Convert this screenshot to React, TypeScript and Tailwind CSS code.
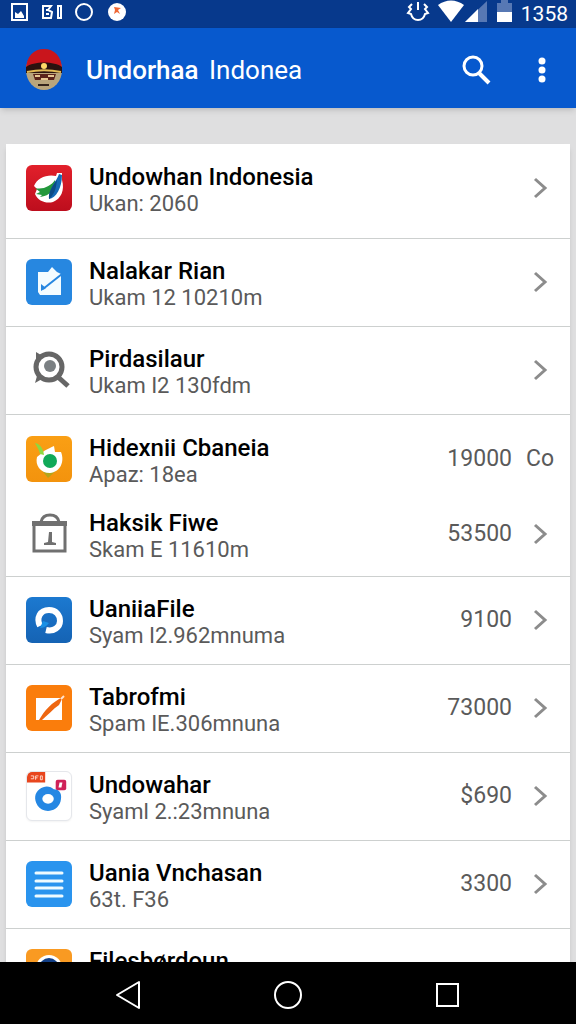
import type { ReactNode } from 'react';

interface Row {
  title: string;
  sub?: string;
  count?: string;
  action?: string;
  icon: ReactNode;
  spacing?: string;
}

const TileIcon = ({ bg, children }: { bg: string; children: ReactNode }) => (
  <svg viewBox="0 0 46 46" className={`h-[46px] w-[46px] rounded-md ${bg}`} aria-hidden="true">
    {children}
  </svg>
);

const LeafIcon = () => (
  <TileIcon bg="bg-linear-to-b from-[#e2202b] to-[#bd0d1d]">
    <path d="M30 11C21 9 11 13 8 21L11 24 9 29C12 36 20 39 27 37C35 34 39 25 36 15L36 8 31 8Z" fill="#fff" />
    <path d="M9 23C17 25 25 21 29 15C30 24 24 31 14 32L16 30 10 29 14 27Z" fill="#23983c" />
    <path d="M33 9C31 16 23 22 23 34C30 33 36 23 36 10Z" fill="#1569b4" />
    <path d="M23 34C22 28 26 21 31 15C30 24 28 30 23 34Z" fill="#0c4b86" />
  </TileIcon>
);

const NoteCheckIcon = () => (
  <TileIcon bg="bg-[#2787e0]">
    <path d="M12 13H22L26 8 31 13 35 15V36H14L12 33Z" fill="#f4fcff" />
    <path d="M17 30L36 15" fill="none" stroke="#2787e0" strokeWidth="2" />
    <path d="M15 25L20 29 15 32Z" fill="#2787e0" />
  </TileIcon>
);

const LensIcon = () => (
  <svg viewBox="0 0 46 46" className="h-[46px] w-[46px]" aria-hidden="true">
    <circle cx="23" cy="20" r="13" fill="none" stroke="#666" strokeWidth="5" />
    <circle cx="24" cy="19" r="6" fill="#7b8083" />
    <path d="M10 5L15 8 10 14ZM11 29L16 32 9 36Z" fill="#666" />
    <path d="M32 30L42 39" stroke="#666" strokeWidth="5" />
  </svg>
);

const FruitIcon = () => (
  <TileIcon bg="bg-linear-to-b from-[#fa9f14] to-[#f3930d]">
    <path d="M14 32L22 42 32 33Z" fill="#b3a51b" />
    <path d="M18 15C22 13 25 11 28 10L29 16 35 16C39 26 34 36 24 37C14 37 9 29 11 21L16 17Z" fill="#fff" />
    <path d="M9 7C14 8 17 12 18 19L14 18C13 13 11 11 9 7Z" fill="#8ed840" />
    <circle cx="24" cy="25" r="7" fill="#11a958" />
  </TileIcon>
);

const CaseIcon = () => (
  <svg viewBox="0 0 46 46" className="h-[46px] w-[46px]" aria-hidden="true">
    <path d="M8 12H39V40H8Z" fill="none" stroke="#707070" strokeWidth="3" />
    <path d="M6 10H41V15H6Z" fill="#707070" />
    <path d="M15 11C16 6 19 4 24 4C29 4 32 6 33 11" fill="none" stroke="#707070" strokeWidth="3" />
    <path d="M23 21H26V31L30 32V34H18V32L22 31Z" fill="#707070" />
  </svg>
);

const SwirlIcon = () => (
  <TileIcon bg="bg-linear-to-b from-[#1c79d0] to-[#1563b4]">
    <path d="M14 29C10 21 14 13 23 13C30 13 34 18 34 24C34 30 28 35 20 33" fill="none" stroke="#fff" strokeWidth="6" />
    <path d="M14 31L17 24 23 26C20 30 17 31 14 31Z" fill="#188fe5" />
  </TileIcon>
);

const PenIcon = () => (
  <TileIcon bg="bg-[#fa7d0c]">
    <path d="M10 13H36V35H10Z" fill="#fff" />
    <path d="M13 35C18 26 26 17 37 12L33 20C27 24 22 30 16 35Z" fill="#ee6712" />
    <path d="M35 14L38 11" stroke="#ffe3cf" strokeWidth="2" />
  </TileIcon>
);

const BlobIcon = () => (
  <svg viewBox="0 0 46 50" className="h-[50px] w-[46px] rounded-md border border-gray-200 bg-white shadow-xs" aria-hidden="true">
    <path d="M4 0H19V11H0V5C0 2 2 0 4 0Z" fill="#e8461e" />
    <path d="M4 4H7V7H4M9 8V4H12M9 6H11M14 4V8M14 4H16V8H14" fill="none" stroke="#ffd9cc" />
    <rect x="30" y="8" width="11" height="11" rx="2" fill="#cf2259" />
    <path d="M34 11H37L36 16H33Z" fill="#fff" />
    <path d="M13 18C19 13 25 15 28 18C35 18 37 24 35 31C31 43 16 43 11 35C7 28 8 22 13 18Z" fill="#2587e3" />
    <ellipse cx="22" cy="28" rx="6" ry="5" fill="#fff" />
  </svg>
);

const LinesIcon = () => (
  <TileIcon bg="bg-[#2a94ee]">
    <path d="M10 12H36M10 20H36M10 27H36M10 35H36" stroke="#effbff" strokeWidth="3" strokeLinecap="round" />
  </TileIcon>
);

const DiscIcon = () => (
  <TileIcon bg="bg-[#f99a22]">
    <circle cx="23" cy="19" r="13" fill="#fff" />
    <circle cx="23" cy="19" r="10" fill="#123f86" />
  </TileIcon>
);

const defaultSpacing = 'pt-3.5 pb-[15px] border-b';

const rows: Row[] = [
  { title: 'Undowhan Indonesia', sub: 'Ukan: 2060', icon: <LeafIcon />, spacing: 'pt-[15px] pb-[21px] border-b' },
  { title: 'Nalakar Rian', sub: 'Ukam 12 10210m', icon: <NoteCheckIcon /> },
  { title: 'Pirdasilaur', sub: 'Ukam I2 130fdm', icon: <LensIcon /> },
  { title: 'Hidexnii Cbaneia', sub: 'Apaz: 18ea', count: '19000', action: 'Co', icon: <FruitIcon />, spacing: 'py-[15px]' },
  { title: 'Haksik Fiwe', sub: 'Skam E 11610m', count: '53500', icon: <CaseIcon />, spacing: 'pt-0.5 pb-[13px] border-b' },
  { title: 'UaniiaFile', sub: 'Syam I2.962mnuma', count: '9100', icon: <SwirlIcon /> },
  { title: 'Tabrofmi', sub: 'Spam IE.306mnuna', count: '73000', icon: <PenIcon /> },
  { title: 'Undowahar', sub: 'Syaml 2.:23mnuna', count: '$690', icon: <BlobIcon /> },
  { title: 'Uania Vnchasan', sub: '63t. F36', count: '3300', icon: <LinesIcon /> },
  { title: 'Filesbørdoun', icon: <DiscIcon /> },
];

const StatusBar = () => (
  <div className="flex h-7 shrink-0 items-center justify-between bg-[#07398c] pr-2 pl-2.5 text-white">
    <svg viewBox="0 0 118 28" className="h-7 w-[118px]" fill="none" stroke="#fff" strokeWidth="2" aria-hidden="true">
      <path d="M2 4H17V20H2Z" />
      <path d="M5 17V12L8 14 11 11 14 16V18H5Z" fill="#fff" stroke="none" />
      <path d="M33 6V18H41L42 12 38 10 41 6ZM36 10H39M36 14H39M48 6H51V18H48Z" />
      <circle cx="74" cy="12" r="8" />
      <circle cx="107" cy="12" r="9" fill="#fff" stroke="none" />
      <path d="M104 7L111 8 108 10 110 14 107 12 104 14 105 10Z" fill="#ef6734" stroke="none" />
    </svg>
    <div className="flex items-center gap-1.5">
      <svg viewBox="0 0 110 28" className="h-7 w-[110px]" aria-hidden="true">
        <path d="M7 4L4 7 6 9 3 13L6 14C7 18 10 20 13 20C16 20 19 18 20 14L23 13 20 9 22 7 19 4M13 2V10" fill="none" stroke="#fff" strokeWidth="2" />
        <path d="M33 5C41-1 51-1 59 5L46 22Z" fill="#fff" />
        <path d="M60 22L82 1V22Z" fill="#5778b4" />
        <path d="M60 22L73 9V22Z" fill="#fff" />
        <path d="M92 3H96V0H103V3H107V12H92Z" fill="#5778b4" />
        <path d="M92 12H107V22H92Z" fill="#fff" />
      </svg>
      <span className="text-[21px] leading-6">1358</span>
    </div>
  </div>
);

const AppBar = () => (
  <header className="relative z-10 flex h-20 shrink-0 items-center bg-[#0759ce] pt-1 pr-4 pl-[25px] text-white shadow-md">
    <svg viewBox="0 0 38 44" className="h-11 w-[38px]" aria-hidden="true">
      <ellipse cx="19" cy="22" rx="18" ry="20" fill="#b9a57c" />
      <path d="M1 22C1 8 9 1 19 1C29 1 37 8 37 22Z" fill="#c9151c" />
      <path d="M1 19C8 13 30 13 37 19V25H1Z" fill="#2a120f" />
      <path d="M2 24C12 22 26 22 36 24" fill="none" stroke="#e3bb55" strokeWidth="2" />
      <circle cx="19" cy="18" r="3" fill="#ffd968" />
      <path d="M8 26H31L29 32H23L19 30 15 32H10Z" fill="#5c241b" />
      <path d="M10 28H15M23 28H29M16 31H23" stroke="#e7c892" strokeWidth="2" />
      <path d="M13 37H24" stroke="#33241c" strokeWidth="2" />
    </svg>
    <h1 className="ml-[23px] min-w-0 flex-1 truncate text-[26px] leading-8 font-normal">
      <span className="font-medium">Undorhaa</span> <span className="ml-1">Indonea</span>
    </h1>
    <button type="button" aria-label="Search" className="mr-7 flex h-10 w-10 items-center justify-center">
      <svg viewBox="0 0 30 30" className="h-[30px] w-[30px]" fill="none" stroke="#fff" aria-hidden="true">
        <circle cx="12" cy="11" r="9" strokeWidth="3" />
        <path d="M18 18L28 28" strokeWidth="4" />
      </svg>
    </button>
    <button type="button" aria-label="More options" className="flex h-10 w-9 items-center justify-center">
      <svg viewBox="0 0 8 28" className="h-7 w-2" fill="#fff" aria-hidden="true">
        <circle cx="4" cy="5" r="3.500" />
        <circle cx="4" cy="14" r="3.500" />
        <circle cx="4" cy="23" r="3.500" />
      </svg>
    </button>
  </header>
);

const ListRow = ({ row }: { row: Row }) => (
  <li>
    <a href="#" className={`flex items-center border-[#cdd0cf] pr-4 pl-5 ${row.spacing ?? defaultSpacing}`}>
      <span className="shrink-0">{row.icon}</span>
      <span className="ml-[17px] min-h-[58px] min-w-0 flex-1 pt-1">
        <span className="block truncate text-2xl leading-7 font-medium text-black">{row.title}</span>
        {row.sub && <span className="block truncate text-[22px] leading-[26px] text-[#5a5a5a]">{row.sub}</span>}
      </span>
      {row.count && <span className="text-[23px] leading-7 text-[#5a5a5a]">{row.count}</span>}
      {row.action ? (
        <span className="ml-3.5 w-7 text-[23px] leading-7 text-[#5a5a5a]">{row.action}</span>
      ) : (
        <svg viewBox="0 0 28 24" className="ml-3.5 h-6 w-7 shrink-0" aria-hidden="true">
          <path d="M9 3L19 12 9 21" fill="none" stroke="#8c8c8c" strokeWidth="3" />
        </svg>
      )}
    </a>
  </li>
);

const NavBar = () => (
  <nav className="flex h-[62px] shrink-0 items-center justify-between bg-black px-[108px] pt-1">
    <button type="button" aria-label="Back" className="flex h-10 w-10 items-center justify-center">
      <svg viewBox="0 0 28 30" className="h-[30px] w-7" fill="none" stroke="#fff" strokeWidth="2" strokeLinejoin="round" aria-hidden="true">
        <path d="M25 2V28L3 15Z" />
      </svg>
    </button>
    <button type="button" aria-label="Home" className="flex h-10 w-10 items-center justify-center">
      <svg viewBox="0 0 30 30" className="h-[30px] w-[30px]" fill="none" stroke="#fff" strokeWidth="2" aria-hidden="true">
        <circle cx="15" cy="15" r="13" />
      </svg>
    </button>
    <button type="button" aria-label="Recent apps" className="flex h-10 w-10 items-center justify-center">
      <svg viewBox="0 0 26 26" className="h-[26px] w-[26px]" fill="none" stroke="#fff" strokeWidth="2" aria-hidden="true">
        <rect x="2" y="2" width="21" height="22" />
      </svg>
    </button>
  </nav>
);

export default function App() {
  return (
    <div className="flex h-screen flex-col bg-[#dfdfe0] font-['Roboto',sans-serif]">
      <StatusBar />
      <AppBar />
      <main className="min-h-0 flex-1 overflow-hidden px-1.5 pt-9">
        <ul className="bg-white shadow-md">
          {rows.map((row) => (
            <ListRow key={row.title} row={row} />
          ))}
        </ul>
      </main>
      <NavBar />
    </div>
  );
}
